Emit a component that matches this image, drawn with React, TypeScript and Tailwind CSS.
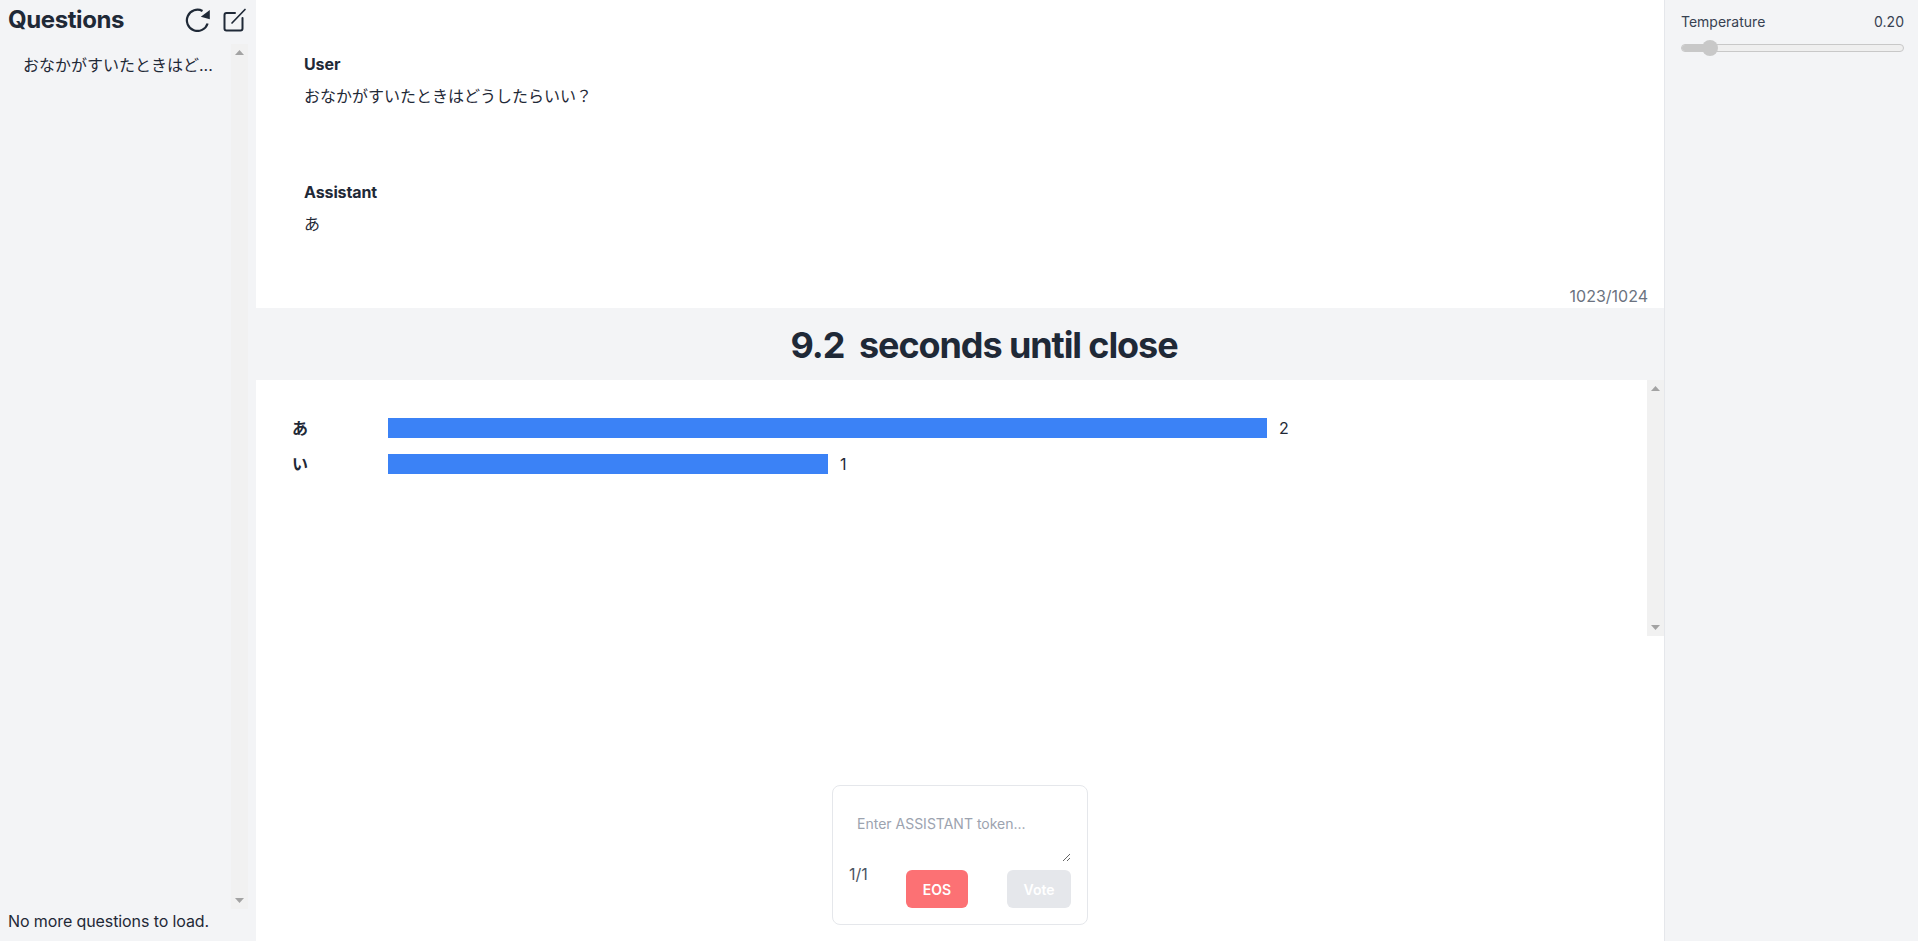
import React from "react";

const Up = () => (
  <svg width="9" height="5" viewBox="0 0 9 5" className="block"><path d="M4.5 0 L9 5 H0 Z" fill="#a3a3a3" /></svg>
);
const Down = () => (
  <svg width="9" height="5" viewBox="0 0 9 5" className="block"><path d="M0 0 H9 L4.5 5 Z" fill="#a3a3a3" /></svg>
);
const Scrollbar = () => (
  <div className="w-[17px] shrink-0 bg-[#f1f1f1] flex flex-col items-center justify-between py-[6px]">
    <Up />
    <Down />
  </div>
);

const Bar = ({ label, width, value }: { label: string; width: string; value: number }) => (
  <div className="flex items-center h-[36px]">
    <div className="w-[96px] font-bold text-[16px] text-[#1f2937]">{label}</div>
    <div className={"h-[20px] bg-[#3b82f6] " + width} />
    <div className="ml-[12px] text-[16px] text-[#1f2937]">{value}</div>
  </div>
);

export default function App() {
  return (
    <div
      className="flex h-[941px] w-[1918px] overflow-hidden bg-white text-[#1f2937]"
      style={{ fontFamily: "Inter, 'Noto Sans CJK JP', sans-serif" }}
    >
      <aside className="w-[256px] shrink-0 bg-[#f3f4f6] flex flex-col pl-[8px]">
        <div className="h-[44px] flex items-start justify-between pr-[9px] pt-[4px]">
          <h1 className="text-[24px] leading-[32px] font-bold tracking-[-0.4px]">Questions</h1>
          <div className="flex items-start gap-[12px] pt-[4px]">
            <svg width="26" height="24" viewBox="0 0 26 24" fill="none">
              <path d="M22.6 15.5A10.6 10.6 0 1 1 17.5 3" stroke="#1f2937" strokeWidth="2.2" />
              <path d="M15.8 8.8L24.8 2V11.2Z" fill="#1f2937" />
            </svg>
            <svg width="24" height="25" viewBox="0 0 24 25" fill="none" stroke="#1f2937" strokeWidth="2" strokeLinecap="round" strokeLinejoin="round" className="-mt-[1px]">
              <path d="M12 6H3.5A2 2 0 0 0 1.5 8v13.5a2 2 0 0 0 2 2h14a2 2 0 0 0 2-2V11" />
              <path d="M9 16L22 2.5" strokeWidth="1.7" />
            </svg>
          </div>
        </div>
        <div className="h-[865px] flex pr-[8px]">
          <div className="flex-1 min-w-0 pl-[15px] pt-[9px] text-[16px] leading-[24px]">おなかがすいたときはど...</div>
          <Scrollbar />
        </div>
        <div className="text-[16px] leading-[24px] tracking-[-0.1px]">No more questions to load.</div>
      </aside>

      <main className="flex-1 min-w-0 flex flex-col">
        <section className="h-[308px] flex flex-col">
          <div className="flex-1 pl-[48px] pt-[52px] text-[16px] leading-[24px]">
            <div className="font-bold tracking-[-0.1px]">User</div>
            <div className="mt-[8px]">おなかがすいたときはどうしたらいい？</div>
            <div className="font-bold tracking-[-0.1px] mt-[72px]">Assistant</div>
            <div className="mt-[8px]">あ</div>
          </div>
          <div className="text-right pr-[16px] text-[#6b7280] text-[16px] leading-[24px]">1023/1024</div>
        </section>
        <div className="h-[72px] bg-[#f3f4f6] flex items-center justify-center pl-[48px] pt-[1px] text-[36px] font-bold leading-[40px] tracking-[-1.1px]">
          <span className="whitespace-pre">9.2  seconds until close</span>
        </div>
        <section className="h-[256px] flex">
          <div className="flex-1 pl-[36px] pt-[30px]">
            <Bar label="あ" width="w-[879px]" value={2} />
            <Bar label="い" width="w-[440px]" value={1} />
          </div>
          <Scrollbar />
        </section>
        <div className="flex-1 flex justify-center items-start pt-[149px]">
          <div className="w-[256px] h-[140px] rounded-[8px] border border-[#e5e7eb] bg-white px-[16px] flex flex-col">
            <textarea
              placeholder="Enter ASSISTANT token..."
              className="mt-[16px] ml-[8px] w-[214px] h-[60px] text-[14px] leading-[20px] px-0 pt-[12px] outline-none placeholder:text-[#9ca3af] bg-white"
            />
            <div className="flex items-start">
              <div className="w-[57px] text-[16px] leading-[24px] text-[#4b5563]">1/1</div>
              <button className="mt-[8px] w-[62px] h-[38px] rounded-[6px] bg-[#fc7174] text-white text-[14px] font-semibold">EOS</button>
              <button className="mt-[8px] ml-[39px] w-[64px] h-[38px] rounded-[6px] bg-[#e5e7eb] text-white text-[14px] font-semibold">Vote</button>
            </div>
          </div>
        </div>
      </main>

      <aside className="w-[254px] shrink-0 bg-[#f3f4f6] border-l border-[#e5e7eb] pl-[16px] pr-[14px] pt-[12px]">
        <div className="flex justify-between text-[14px] leading-[20px] text-[#374151]">
          <span>Temperature</span>
          <span>0.20</span>
        </div>
        <div className="relative mt-[12px] h-[8px] rounded-full border border-[#c8c8c8] bg-[#efefef]">
          <div className="h-full w-[25px] rounded-full bg-[#c8c8c8]" />
          <div className="absolute left-[20px] top-[-5px] w-[16px] h-[16px] rounded-full bg-[#c8c8c8]" />
        </div>
      </aside>
    </div>
  );
}
